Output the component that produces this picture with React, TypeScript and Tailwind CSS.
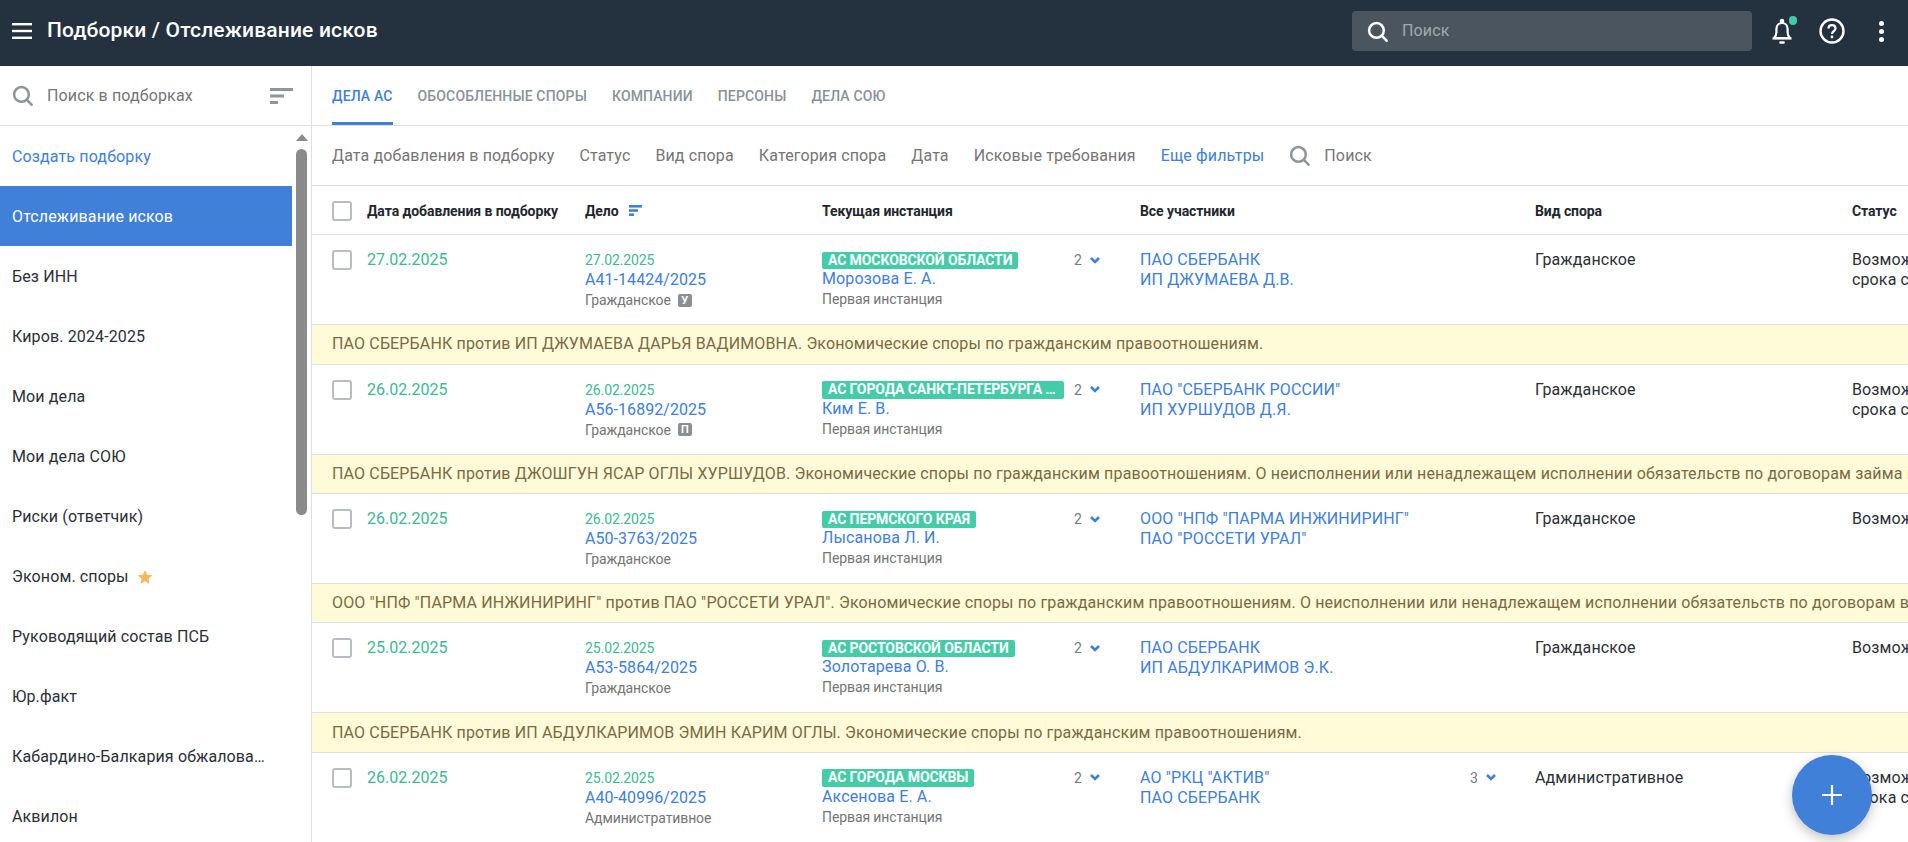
const collections = [
  "Без ИНН",
  "Киров. 2024-2025",
  "Мои дела",
  "Мои дела СОЮ",
  "Риски (ответчик)",
  "Эконом. споры",
  "Руководящий состав ПСБ",
  "Юр.факт",
  "Кабардино-Балкария обжалование",
  "Аквилон",
];

const tabs = ["Обособленные споры", "Компании", "Персоны", "Дела СОЮ"];
const filters = ["Дата добавления в подборку", "Статус", "Вид спора", "Категория спора", "Дата", "Исковые требования"];

type Row = {
  added: string;
  date: string;
  num: string;
  kind: string;
  mark?: string;
  court: string;
  judge: string;
  parties: string[];
  partiesMore?: number;
  type: string;
  status: string[];
  note: string;
};

const rows: Row[] = [
  {
    added: "27.02.2025",
    date: "27.02.2025",
    num: "А41-14424/2025",
    kind: "Гражданское",
    mark: "У",
    court: "АС Московской области",
    judge: "Морозова Е. А.",
    parties: ["ПАО СБЕРБАНК", "ИП ДЖУМАЕВА Д.В."],
    type: "Гражданское",
    status: ["Возможно обжалование", "срока с даты"],
    note: "ПАО СБЕРБАНК против ИП ДЖУМАЕВА ДАРЬЯ ВАДИМОВНА. Экономические споры по гражданским правоотношениям.",
  },
  {
    added: "26.02.2025",
    date: "26.02.2025",
    num: "А56-16892/2025",
    kind: "Гражданское",
    mark: "П",
    court: "АС города Санкт-Петербурга и Ленинградской области",
    judge: "Ким Е. В.",
    parties: ['ПАО "СБЕРБАНК РОССИИ"', "ИП ХУРШУДОВ Д.Я."],
    type: "Гражданское",
    status: ["Возможно обжалование", "срока с даты"],
    note: "ПАО СБЕРБАНК против ДЖОШГУН ЯСАР ОГЛЫ ХУРШУДОВ. Экономические споры по гражданским правоотношениям. О неисполнении или ненадлежащем исполнении обязательств по договорам займа и кредита",
  },
  {
    added: "26.02.2025",
    date: "26.02.2025",
    num: "А50-3763/2025",
    kind: "Гражданское",
    court: "АС Пермского края",
    judge: "Лысанова Л. И.",
    parties: ['ООО "НПФ "ПАРМА ИНЖИНИРИНГ"', 'ПАО "РОССЕТИ УРАЛ"'],
    type: "Гражданское",
    status: ["Возможно обжалование"],
    note: 'ООО "НПФ "ПАРМА ИНЖИНИРИНГ" против ПАО "РОССЕТИ УРАЛ". Экономические споры по гражданским правоотношениям. О неисполнении или ненадлежащем исполнении обязательств по договорам возмездного оказания услуг',
  },
  {
    added: "25.02.2025",
    date: "25.02.2025",
    num: "А53-5864/2025",
    kind: "Гражданское",
    court: "АС Ростовской области",
    judge: "Золотарева О. В.",
    parties: ["ПАО СБЕРБАНК", "ИП АБДУЛКАРИМОВ Э.К."],
    type: "Гражданское",
    status: ["Возможно обжалование"],
    note: "ПАО СБЕРБАНК против ИП АБДУЛКАРИМОВ ЭМИН КАРИМ ОГЛЫ. Экономические споры по гражданским правоотношениям.",
  },
  {
    added: "26.02.2025",
    date: "25.02.2025",
    num: "А40-40996/2025",
    kind: "Административное",
    court: "АС города Москвы",
    judge: "Аксенова Е. А.",
    parties: ['АО "РКЦ "АКТИВ"', "ПАО СБЕРБАНК"],
    partiesMore: 3,
    type: "Административное",
    status: ["Возможно обжалование", "срока с даты"],
    note: "",
  },
];

function SearchIcon({ className }: { className: string }) {
  return (
    <svg viewBox="0 0 20 20" fill="none" stroke="currentColor" strokeWidth="2.4" strokeLinecap="round" className={className}>
      <circle cx="9" cy="9" r="7" />
      <path d="M14 14l4.6 4.8" />
    </svg>
  );
}

function SortIcon({ className }: { className: string }) {
  return (
    <svg viewBox="0 0 23 16" fill="currentColor" className={className}>
      <rect x="0" y="0" width="23" height="3" />
      <rect x="0" y="6.5" width="14" height="3" />
      <rect x="0" y="13" width="8" height="3" />
    </svg>
  );
}

function Count({ n }: { n: number }) {
  return (
    <div className="flex items-center gap-[8px] text-sm text-[#6f7b87]">
      {n}
      <svg viewBox="0 0 10 7" fill="none" stroke="#4080d8" strokeWidth="2.6" className="w-[10px] h-[7px]">
        <path d="M1 1l4 4 4-4" />
      </svg>
    </div>
  );
}

function Checkbox() {
  return <div className="w-5 h-5 rounded-[3px] border-2 border-[#b9bdc1] bg-white" />;
}

function TopBar() {
  return (
    <header className="h-[66px] shrink-0 bg-[#243240] flex items-center pl-3 pb-1 text-white">
      <svg viewBox="0 0 20 16" fill="white" className="w-5 h-4">
        <rect y="0" width="20" height="2.4" />
        <rect y="6.8" width="20" height="2.4" />
        <rect y="13.6" width="20" height="2.4" />
      </svg>
      <h1 className="ml-[15px] text-[21px] font-medium tracking-[0.16px]">Подборки / Отслеживание исков</h1>
      <div className="ml-auto w-[400px] h-10 rounded bg-[#4a5560] flex items-center pl-[15px]">
        <SearchIcon className="w-[21px] h-[21px] text-white" />
        <span className="ml-[14px] text-base text-[#a3a8ad]">Поиск</span>
      </div>
      <div className="ml-[16px] w-7 h-7 relative flex items-center justify-center">
        <svg viewBox="0 0 24 28" fill="none" stroke="white" strokeWidth="2.2" strokeLinejoin="round" className="w-6 h-7">
          <path d="M4 21h16c-1.6-1.6-2.4-3-2.4-5.5V12c0-3.4-2.4-6-5.6-6S6.4 8.6 6.4 12v3.5C6.4 18 5.6 19.4 4 21z" />
          <path d="M2.5 21.5h19" />
          <circle cx="12" cy="4" r="1.2" fill="white" />
          <path d="M10.5 25.5h3" strokeWidth="2.6" strokeLinecap="round" />
        </svg>
        <span className="absolute top-[-1px] right-[-1px] w-2 h-[9px] rounded-full bg-[#3fcca8]" />
      </div>
      <svg viewBox="0 0 26 26" fill="none" stroke="white" className="ml-[23px] w-[26px] h-[26px]">
        <circle cx="13" cy="13" r="11.5" strokeWidth="2.4" />
        <path d="M9.5 10.5c0-2 1.5-3.3 3.5-3.3s3.5 1.3 3.5 3.2c0 2.6-3.5 2.8-3.5 5.6" strokeWidth="2.2" />
        <circle cx="13" cy="19" r="1.4" fill="white" stroke="none" />
      </svg>
      <div className="ml-[34px] mr-6 flex flex-col gap-[3px]">
        <span className="w-[5px] h-[5px] rounded-full bg-white" />
        <span className="w-[5px] h-[5px] rounded-full bg-white" />
        <span className="w-[5px] h-[5px] rounded-full bg-white" />
      </div>
    </header>
  );
}

function Sidebar() {
  return (
    <aside className="w-[312px] shrink-0 border-r border-[#e0e0e0] flex flex-col min-h-0">
      <div className="h-[60px] shrink-0 border-b border-[#e0e0e0] flex items-center pl-3 pr-[18px]">
        <SearchIcon className="w-[21px] h-[21px] text-[#8f9599]" />
        <span className="ml-[14px] text-base text-[#757575]">Поиск в подборках</span>
        <SortIcon className="ml-auto w-[23px] h-4 text-[#8f9599]" />
      </div>
      <div className="flex-1 flex min-h-0">
        <div className="flex-1 min-w-0 overflow-hidden">
          <div className="h-[60px] pt-[2px] flex items-center pl-3 text-base text-[#4080d8]">Создать подборку</div>
          <div className="h-[60px] pt-[2px] flex items-center pl-3 text-base text-white bg-[#4080d8]">Отслеживание исков</div>
          {collections.map((name) => (
            <div key={name} className="h-[60px] pt-[2px] flex items-center pl-3 pr-6 text-base text-[#2a3038]">
              <span className="truncate">{name}</span>
              {name === "Эконом. споры" && (
                <svg viewBox="0 0 24 24" fill="#f5b95b" className="ml-2 w-4 h-4 shrink-0">
                  <path d="M12 1.5l3.3 7 7.7.9-5.7 5.2 1.5 7.6L12 18.4l-6.8 3.8 1.5-7.6L1 9.4l7.7-.9z" />
                </svg>
              )}
            </div>
          ))}
        </div>
        {/* scrollbar */}
        <div className="w-[19px] shrink-0 flex flex-col items-center pt-2">
          <div className="w-0 h-0 border-x-[6px] border-x-transparent border-b-[7px] border-b-[#8a8a8a]" />
          <div className="mt-[8px] w-[11px] h-[366px] rounded-full bg-[#8a8a8a]" />
        </div>
      </div>
    </aside>
  );
}

function CaseRow({ row }: { row: Row }) {
  return (
    <>
      <div className="h-[89px] grid grid-cols-[35px_218px_237px_318px_395px_317px_320px] pl-5 pt-[15px]">
        <Checkbox />
        <div className="text-base leading-5 tracking-normal text-[#3db896]">{row.added}</div>
        <div>
          <div className="text-sm leading-5 tracking-[-0.1px] text-[#3db896]">{row.date}</div>
          <div className="text-base leading-5 tracking-[0.05px] text-[#4080d8]">{row.num}</div>
          <div className="text-sm leading-5 tracking-[-0.1px] text-[#757575] flex items-center gap-[7px]">
            {row.kind}
            {row.mark && (
              <span className="w-[14px] h-[13px] rounded-[2px] bg-[#8a8f94] text-white text-[11px] leading-[13px] font-bold text-center">
                {row.mark}
              </span>
            )}
          </div>
        </div>
        <div className="flex items-start">
          <div className="w-[252px] min-w-0">
            <div className="mt-[1.5px] max-w-[242px] w-fit h-[17.5px] rounded-[2px] bg-[#44cca8] px-[6px] text-white text-sm leading-[17.5px] tracking-[-0.1px] font-bold uppercase truncate">
              {row.court}
            </div>
            <div className="text-base leading-5 text-[#4080d8]">{row.judge}</div>
            <div className="text-sm leading-5 tracking-[-0.1px] text-[#757575]">Первая инстанция</div>
          </div>
          <Count n={2} />
        </div>
        <div className="flex items-start">
          <div className="w-[330px] text-base leading-5 text-[#4080d8]">
            {row.parties.map((p) => (
              <div key={p}>{p}</div>
            ))}
          </div>
          {row.partiesMore && <Count n={row.partiesMore} />}
        </div>
        <div className="text-base leading-5 text-[#2a3038]">{row.type}</div>
        <div className="text-base leading-5 text-[#2a3038] whitespace-nowrap">
          {row.status.map((s) => (
            <div key={s}>{s}</div>
          ))}
        </div>
      </div>
      {row.note && (
        <div className="h-[40.4px] border-y border-[#e0e0e0] bg-[#fffbd8] flex items-center pl-5 text-base tracking-[0.145px] text-[#7a6a42] whitespace-nowrap">
          {row.note}
        </div>
      )}
    </>
  );
}

export default function App() {
  return (
    <div className="relative h-[842px] overflow-hidden bg-white flex flex-col font-[Roboto,sans-serif] tracking-[0.13px]">
      <TopBar />
      <div className="flex-1 flex min-h-0">
        <Sidebar />
        <main className="flex-1 min-w-0 overflow-hidden">
          <div className="h-[60px] border-b border-[#e0e0e0] flex items-center gap-[25px] pl-5 text-sm tracking-[0.15px] font-medium uppercase text-[#8a9199]">
            <div className="relative h-full flex items-center text-[#4080d8]">
              Дела АС
              {/* active tab marker */}
              <span className="absolute left-0 right-0 bottom-0 h-[3px] bg-[#4080d8]" />
            </div>
            {tabs.map((t) => (
              <div key={t}>{t}</div>
            ))}
          </div>
          <div className="h-[60px] border-b border-[#e0e0e0] flex items-center gap-[25px] pl-5 text-base text-[#757575]">
            {filters.map((f) => (
              <div key={f}>{f}</div>
            ))}
            <div className="text-[#4080d8]">Еще фильтры</div>
            <div className="flex items-center gap-[14px] text-[#757575]">
              <SearchIcon className="w-[21px] h-[21px] text-[#8f9599]" />
              Поиск
            </div>
          </div>
          <div className="h-[49px] pt-px border-b border-[#e0e0e0] grid grid-cols-[35px_218px_237px_318px_395px_317px_320px] items-center pl-5 text-sm tracking-[-0.07px] font-bold text-[#22272e] whitespace-nowrap">
            <Checkbox />
            <div>Дата добавления в подборку</div>
            <div className="flex items-center gap-[10px]">
              Дело
              <svg viewBox="0 0 13 11" fill="#4080d8" className="w-[13px] h-[11px]">
                <rect width="13" height="2.6" />
                <rect y="4.2" width="9" height="2.6" />
                <rect y="8.4" width="5" height="2.6" />
              </svg>
            </div>
            <div>Текущая инстанция</div>
            <div>Все участники</div>
            <div>Вид спора</div>
            <div>Статус</div>
          </div>
          {/* fractional offset so the row lines land where the original's do */}
          <div className="mt-[0.3px]">
            {rows.map((row) => (
              <CaseRow key={row.num} row={row} />
            ))}
          </div>
        </main>
      </div>
      <button
        type="button"
        className="absolute right-[36px] bottom-[7px] w-20 h-20 rounded-full bg-[#4080d8] shadow-[0_4px_12px_rgba(0,0,0,0.25)] flex items-center justify-center"
      >
        <svg viewBox="0 0 24 24" fill="none" stroke="white" strokeWidth="2.2" className="w-6 h-6">
          <path d="M12 2v20M2 12h20" />
        </svg>
      </button>
    </div>
  );
}
